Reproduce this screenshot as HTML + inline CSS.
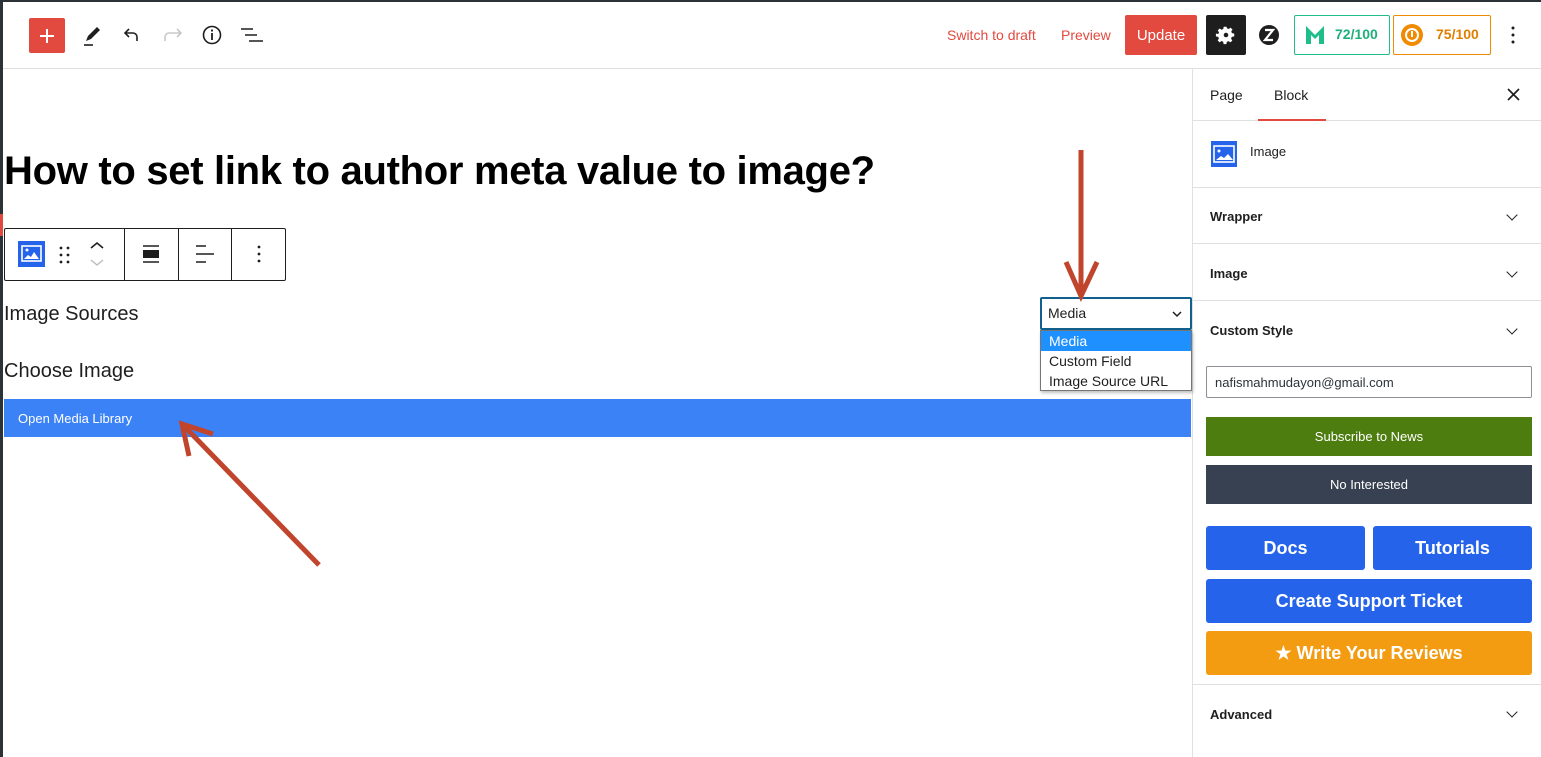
<!DOCTYPE html>
<html><head><meta charset="utf-8"><style>
*{box-sizing:border-box;margin:0;padding:0}
body{width:1541px;height:757px;overflow:hidden;background:#fff;font-family:"Liberation Sans",sans-serif;color:#1e1e1e;position:relative}
.a{position:absolute}
.sec{position:absolute;left:1210px;font-size:13px;font-weight:bold;color:#1e1e1e}
.chev{position:absolute;left:1508px;width:8px;height:8px;border-right:1.8px solid #1e1e1e;border-bottom:1.8px solid #1e1e1e;transform:rotate(45deg)}
.btn{position:absolute;color:#fff;display:flex;align-items:center;justify-content:center;border-radius:3px}
</style></head><body>
<div class="a" style="left:0;top:0;width:1541px;height:2px;background:#2c3338"></div>
<div class="a" style="left:0;top:0;width:3px;height:757px;background:#2c3338"></div>
<div class="a" style="left:3px;top:68px;width:1538px;height:1px;background:#e0e0e0"></div>
<div class="a" style="left:1192px;top:68px;width:1px;height:689px;background:#e0e0e0"></div>

<div class="a" style="left:29px;top:18px;width:36px;height:35px;background:#e2493f;border-radius:2px"></div>
<svg class="a" style="left:37px;top:26px" width="20" height="20"><path d="M10 3v14M3 10h14" stroke="#fff" stroke-width="2"/></svg>
<svg class="a" style="left:80px;top:22px" width="24" height="26"><path d="M6 19 L8 14 L17 5 L20 8 L11 17 Z" fill="#1e1e1e"/><path d="M4 23h9" stroke="#1e1e1e" stroke-width="1.6"/></svg>
<svg class="a" style="left:121px;top:24px" width="24" height="22"><path d="M16 17v-4a4 4 0 0 0-4-4H4M8 5 4 9l4 4" fill="none" stroke="#1e1e1e" stroke-width="1.6"/></svg>
<svg class="a" style="left:161px;top:24px" width="24" height="22"><path d="M4 17v-4a4 4 0 0 1 4-4h12M16 5l4 4-4 4" fill="none" stroke="#c8c8c8" stroke-width="1.6"/></svg>
<svg class="a" style="left:200px;top:23px" width="24" height="24"><circle cx="12" cy="12" r="8.5" fill="none" stroke="#1e1e1e" stroke-width="1.6"/><path d="M12 10v7" stroke="#1e1e1e" stroke-width="1.8"/><circle cx="12" cy="7.5" r="1.1" fill="#1e1e1e"/></svg>
<svg class="a" style="left:240px;top:24px" width="24" height="22"><path d="M1 5h12M5 11h12M9 17h14" stroke="#1e1e1e" stroke-width="1.6"/></svg>

<div class="a" style="left:947px;top:27px;font-size:14px;color:#e2493f">Switch to draft</div>
<div class="a" style="left:1061px;top:27px;font-size:14px;color:#e2493f">Preview</div>
<div class="btn" style="left:1125px;top:15px;width:72px;height:40px;background:#e2493f;font-size:15px;border-radius:2px">Update</div>
<div class="a" style="left:1206px;top:15px;width:40px;height:40px;background:#1e1e1e;border-radius:2px"></div>
<svg class="a" style="left:1215px;top:24px" width="22" height="22" viewBox="0 0 24 24"><path fill="#fff" d="M12 8a4 4 0 1 0 0 8 4 4 0 0 0 0-8zm9 5.5v-3l-2.5-.5-.8-1.8 1.4-2.1-2.1-2.1-2.1 1.4-1.8-.8L12.5 3h-3l-.5 2.5-1.8.8-2.1-1.4-2.1 2.1 1.4 2.1-.8 1.8L1 10.5v3l2.5.5.8 1.8-1.4 2.1 2.1 2.1 2.1-1.4 1.8.8.5 2.6h3l.5-2.5 1.8-.8 2.1 1.4 2.1-2.1-1.4-2.1.8-1.8z"/><circle cx="12" cy="12" r="2.5" fill="#1e1e1e"/></svg>
<svg class="a" style="left:1258px;top:24px" width="22" height="22"><circle cx="11" cy="11" r="10" fill="#1e1e1e"/><path d="M7 6h8l-8 10h8" fill="none" stroke="#fff" stroke-width="2.2"/></svg>
<div class="a" style="left:1294px;top:15px;width:96px;height:40px;border:1px solid #1fbd8a;border-radius:2px"></div>
<svg class="a" style="left:1305px;top:25px" width="20" height="20"><path d="M1 1l9 9 9-9v18h-5v-9l-4 4-4-4v9H1z" fill="#1fbd8a"/></svg>
<div class="a" style="left:1335px;top:26px;font-size:14px;font-weight:bold;color:#1fae7c">72/100</div>
<div class="a" style="left:1393px;top:15px;width:98px;height:40px;border:1px solid #f08a00;border-radius:2px"></div>
<svg class="a" style="left:1400px;top:23px" width="24" height="24"><circle cx="12" cy="12" r="11" fill="#f08a00"/><circle cx="12" cy="12" r="6" fill="none" stroke="#fff" stroke-width="2"/><path d="M12 8v6" stroke="#fff" stroke-width="2"/></svg>
<div class="a" style="left:1436px;top:26px;font-size:14px;font-weight:bold;color:#e07f00">75/100</div>
<svg class="a" style="left:1508px;top:25px" width="10" height="20"><circle cx="5" cy="3" r="1.5" fill="#1e1e1e"/><circle cx="5" cy="10" r="1.5" fill="#1e1e1e"/><circle cx="5" cy="17" r="1.5" fill="#1e1e1e"/></svg>

<div class="a" style="left:4px;top:149px;font-size:40px;font-weight:bold;color:#000;letter-spacing:-0.3px;white-space:nowrap">How to set link to author meta value to image?</div>
<div class="a" style="left:0;top:214px;width:3px;height:22px;background:#e2493f"></div>
<div class="a" style="left:4px;top:228px;width:282px;height:53px;border:1px solid #1e1e1e;border-radius:2px"></div>
<div class="a" style="left:124px;top:229px;width:1px;height:51px;background:#1e1e1e"></div>
<div class="a" style="left:178px;top:229px;width:1px;height:51px;background:#1e1e1e"></div>
<div class="a" style="left:231px;top:229px;width:1px;height:51px;background:#1e1e1e"></div>
<svg class="a" style="left:18px;top:241px" width="27" height="26"><rect width="27" height="26" fill="#2563eb"/><rect x="4" y="5" width="19" height="15" fill="none" stroke="#fff" stroke-width="1.6"/><path d="M6 18l4-4 3 2 3-5 5 7z" fill="#fff"/><circle cx="9" cy="9" r="1.5" fill="#fff"/></svg>
<svg class="a" style="left:58px;top:245px" width="14" height="20"><g fill="#1e1e1e"><circle cx="3" cy="3" r="1.4"/><circle cx="10" cy="3" r="1.4"/><circle cx="3" cy="10" r="1.4"/><circle cx="10" cy="10" r="1.4"/><circle cx="3" cy="17" r="1.4"/><circle cx="10" cy="17" r="1.4"/></g></svg>
<svg class="a" style="left:89px;top:240px" width="16" height="30"><path d="M2 8l6-5 6 5" fill="none" stroke="#1e1e1e" stroke-width="1.6"/><path d="M2 20l6 5 6-5" fill="none" stroke="#bbb" stroke-width="1.4"/></svg>
<svg class="a" style="left:142px;top:244px" width="18" height="20"><path d="M1 2h16M1 18h16" stroke="#1e1e1e" stroke-width="1.5"/><rect x="1" y="6" width="16" height="8" fill="#1e1e1e"/></svg>
<svg class="a" style="left:195px;top:244px" width="20" height="20"><path d="M1 2h10M1 10h18M1 18h10" stroke="#1e1e1e" stroke-width="1.5"/></svg>
<svg class="a" style="left:254px;top:244px" width="10" height="20"><circle cx="5" cy="3" r="1.4" fill="#1e1e1e"/><circle cx="5" cy="10" r="1.4" fill="#1e1e1e"/><circle cx="5" cy="17" r="1.4" fill="#1e1e1e"/></svg>

<div class="a" style="left:4px;top:303px;font-size:20px;color:#1e1e1e">Image Sources</div>
<div class="a" style="left:4px;top:360px;font-size:20px;color:#1e1e1e">Choose Image</div>

<div class="a" style="left:1040px;top:297px;width:152px;height:33px;border:2px solid #10618f;border-radius:2px;background:#fff"></div>
<div class="a" style="left:1048px;top:305px;font-size:14px;color:#1e1e1e">Media</div>
<svg class="a" style="left:1172px;top:310px" width="10" height="8"><path d="M1 2l4 4 4-4" fill="none" stroke="#1e1e1e" stroke-width="1.5"/></svg>
<div class="a" style="left:1040px;top:330px;width:152px;height:61px;border:1px solid #767676;background:#fff;box-shadow:1px 2px 3px rgba(0,0,0,.25)"></div>
<div class="a" style="left:1041px;top:331px;width:150px;height:20px;background:#1e90ff"></div>
<div class="a" style="left:1049px;top:333px;font-size:14px;color:#fff">Media</div>
<div class="a" style="left:1049px;top:353px;font-size:14px;color:#1e1e1e">Custom Field</div>
<div class="a" style="left:1049px;top:373px;font-size:14px;color:#1e1e1e">Image Source URL</div>

<div class="a" style="left:4px;top:399px;width:1187px;height:38px;background:#3b82f6"></div>
<div class="a" style="left:18px;top:411px;font-size:13px;color:#fff">Open Media Library</div>

<svg class="a" style="left:0;top:0" width="1190" height="757"><path d="M1081 150V290" stroke="#c0452c" stroke-width="5"/><path d="M1066 262 1081 296 1097 262" fill="none" stroke="#c0452c" stroke-width="5"/><path d="M319 565 184 426" stroke="#c0452c" stroke-width="5"/><path d="M213 434 182 424 189 456" fill="none" stroke="#c0452c" stroke-width="5"/></svg>

<div class="a" style="left:1210px;top:87px;font-size:14px">Page</div>
<div class="a" style="left:1274px;top:87px;font-size:14px">Block</div>
<div class="a" style="left:1193px;top:120px;width:348px;height:1px;background:#e0e0e0"></div>
<div class="a" style="left:1258px;top:119px;width:68px;height:2px;background:#e2493f"></div>
<svg class="a" style="left:1507px;top:88px" width="13" height="13"><path d="M1 1l11 11M12 1 1 12" stroke="#1e1e1e" stroke-width="1.7"/></svg>
<svg class="a" style="left:1211px;top:141px" width="26" height="26"><rect width="26" height="26" fill="#2563eb"/><rect x="3" y="5" width="20" height="16" fill="none" stroke="#fff" stroke-width="1.6"/><path d="M5 19l5-4 3 2 4-4 5 6z" fill="#fff"/><circle cx="8" cy="10" r="1.5" fill="#fff"/></svg>
<div class="a" style="left:1250px;top:144px;font-size:13px">Image</div>
<div class="a" style="left:1193px;top:187px;width:348px;height:1px;background:#e0e0e0"></div>
<div class="sec" style="top:209px">Wrapper</div><div class="chev" style="top:211px"></div>
<div class="a" style="left:1193px;top:243px;width:348px;height:1px;background:#e0e0e0"></div>
<div class="sec" style="top:266px">Image</div><div class="chev" style="top:268px"></div>
<div class="a" style="left:1193px;top:300px;width:348px;height:1px;background:#e0e0e0"></div>
<div class="sec" style="top:323px">Custom Style</div><div class="chev" style="top:325px"></div>
<div class="a" style="left:1206px;top:366px;width:326px;height:32px;border:1px solid #8c8f94;border-radius:2px"></div>
<div class="a" style="left:1215px;top:375px;font-size:13px;color:#2c3338">nafismahmudayon@gmail.com</div>
<div class="btn" style="left:1206px;top:417px;width:326px;height:39px;background:#4d7c0f;font-size:13px;border-radius:0">Subscribe to News</div>
<div class="btn" style="left:1206px;top:465px;width:326px;height:39px;background:#374151;font-size:13px;border-radius:0">No Interested</div>
<div class="btn" style="left:1206px;top:526px;width:159px;height:44px;background:#2563eb;font-size:18px;font-weight:bold">Docs</div>
<div class="btn" style="left:1373px;top:526px;width:159px;height:44px;background:#2563eb;font-size:18px;font-weight:bold">Tutorials</div>
<div class="btn" style="left:1206px;top:579px;width:326px;height:44px;background:#2563eb;font-size:18px;font-weight:bold">Create Support Ticket</div>
<div class="btn" style="left:1206px;top:631px;width:326px;height:44px;background:#f39c12;font-size:18px;font-weight:bold">★ Write Your Reviews</div>
<div class="a" style="left:1193px;top:684px;width:348px;height:1px;background:#e0e0e0"></div>
<div class="sec" style="top:707px">Advanced</div><div class="chev" style="top:708px"></div>
</body></html>
